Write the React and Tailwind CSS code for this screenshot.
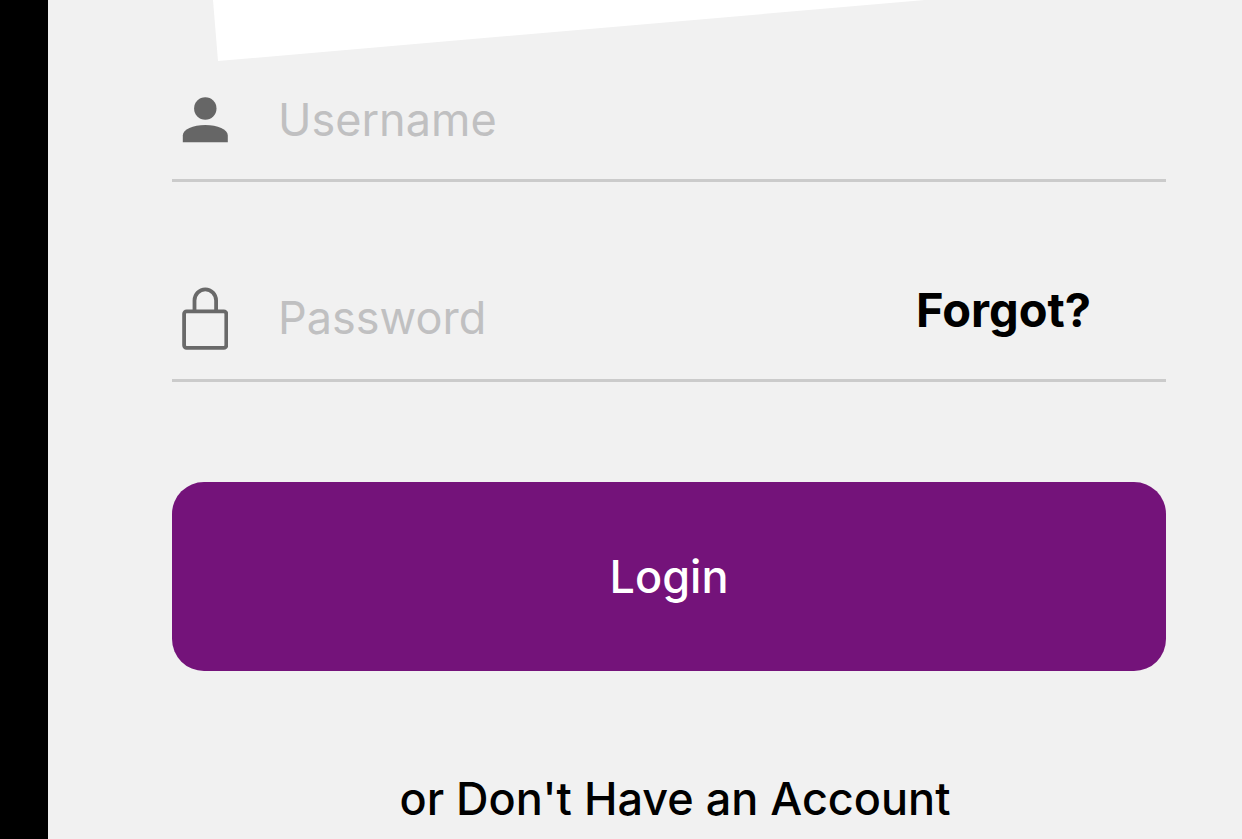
import { useState } from 'react'
import { clsx } from 'clsx'

function UserIcon() {
  return (
    <svg viewBox="0 0 46 46" className="w-[46px] h-[46px]" fill="#666" aria-hidden="true">
      <circle cx="23.300" cy="11.500" r="11.200" />
      <path d="M0.800 45.300V38.500C0.800 32.500 11 28 23.300 28S45.800 32.500 45.800 38.500V45.300Z" />
    </svg>
  )
}

function LockIcon() {
  return (
    <svg viewBox="0 0 46 64" className="w-[46px] h-16" fill="none" stroke="#696969" strokeWidth="3.800" aria-hidden="true">
      <rect x="2.100" y="25.300" width="42.200" height="36.500" rx="2.500" />
      <path d="M12.500 25V14.500a10.800 11.200 0 0 1 21.600 0V25" />
    </svg>
  )
}

function Field({ id, label, type, icon, value, onChange, className, children }) {
  return (
    <div className={clsx('flex items-center border-b-3 border-[#cbcbcb] pl-[10px]', className)}>
      <label htmlFor={id} aria-label={label} className="shrink-0">{icon}</label>
      <input
        id={id}
        type={type}
        placeholder={label}
        value={value}
        onChange={e => onChange(e.target.value)}
        className="flex-1 min-w-0 ml-[50px] bg-transparent text-[45px] leading-[56px] text-black placeholder:text-[#c0c0c1] focus:outline-none"
      />
      {children}
    </div>
  )
}

export default function App() {
  const [username, setUsername] = useState('')
  const [password, setPassword] = useState('')

  return (
    <div className="min-h-screen flex bg-[#f1f1f1] font-['Inter',sans-serif] overflow-x-hidden">
      <div className="w-12 shrink-0 bg-black" />

      <main className="flex-1 min-w-0 pl-[124px] pr-[76px]">
        {/* Corner of the tilted artwork */}
        <svg viewBox="0 0 712 61" className="block w-[712px] h-[61px] ml-[41px]" fill="#fff" aria-hidden="true">
          <path d="M0 0H712L5 61Z" />
        </svg>

        <form onSubmit={e => e.preventDefault()}>
          <Field
            id="username"
            label="Username"
            type="text"
            icon={<UserIcon />}
            value={username}
            onChange={setUsername}
            className="h-[121px]"
          />

          <Field
            id="password"
            label="Password"
            type="password"
            icon={<LockIcon />}
            value={password}
            onChange={setPassword}
            className="h-[125px] mt-[75px]"
          >
            <a href="#forgot" className="pb-4 pr-[75px] text-[47px] leading-[56px] font-bold text-black">Forgot?</a>
          </Field>

          <button
            type="submit"
            className="block w-full h-[189px] mt-[100px] rounded-[32px] bg-[#74137a] text-[45px] leading-[56px] font-medium text-white"
          >
            Login
          </button>
        </form>

        <p className="mt-[100px] pl-3 text-center text-[45px] leading-[56px] font-medium text-black">
          or Don't Have an Account
        </p>
      </main>
    </div>
  )
}
